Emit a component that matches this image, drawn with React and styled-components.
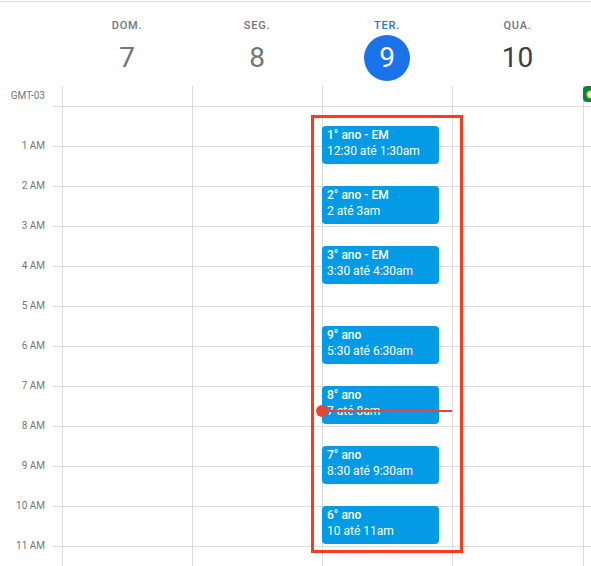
import React from "react";
import styled, { createGlobalStyle } from "styled-components";

const GlobalStyle = createGlobalStyle`
  html, body {
    margin: 0;
    padding: 0;
    background: #fff;
  }
  body {
    font-family: Roboto, "Noto Sans", Arial, sans-serif;
    -webkit-font-smoothing: antialiased;
  }
`;

const LINE = "#dadce0";
const HOUR = 40;
const COLS = "62px 130px 130px 130px 131px 130px";

const Page = styled.div`
  position: relative;
  width: 591px;
  height: 566px;
  overflow: hidden;
  padding-top: 1px;
  box-sizing: border-box;
`;

const Header = styled.div`
  display: grid;
  grid-template-columns: ${COLS};
  border-top: 1px solid ${LINE};
  padding: 16px 0 5px;
`;

const DayHead = styled.div`
  display: flex;
  flex-direction: column;
  align-items: center;
  gap: 1px;
`;

const DayLabel = styled.div`
  font-size: 11px;
  font-weight: 500;
  line-height: 16px;
  height: 16px;
  letter-spacing: 0.8px;
  text-transform: uppercase;
  color: ${(p) => (p.$today ? "#1a73e8" : "#70757a")};
`;

const DayNumber = styled.div`
  width: 46px;
  height: 46px;
  border-radius: 50%;
  display: flex;
  align-items: center;
  justify-content: center;
  font-size: 28px;
  line-height: 1;
  background: ${(p) => (p.$today ? "#1a73e8" : "transparent")};
  color: ${(p) => (p.$today ? "#fff" : p.$future ? "#3c4043" : "#70757a")};
`;

const Grid = styled.div`
  display: grid;
  grid-template-columns: ${COLS};
`;

const Gutter = styled.div`
  display: flex;
  flex-direction: column;
`;

const tick = `linear-gradient(${LINE}, ${LINE}) right bottom / 9px 1px no-repeat`;

const AllDayGutter = styled.div`
  height: 21px;
  padding: 0 17px 1px 0;
  box-sizing: border-box;
  display: flex;
  align-items: center;
  justify-content: flex-end;
  background: ${tick};
`;

const GutterText = styled.span`
  font-size: 10px;
  line-height: 12px;
  color: #70757a;
`;

const HourLabel = styled.div`
  height: ${HOUR}px;
  flex-shrink: 0;
  padding-right: 17px;
  box-sizing: border-box;
  display: flex;
  align-items: flex-end;
  justify-content: flex-end;
  background: ${tick};

  ${GutterText} {
    transform: translateY(5px);
  }
`;

const DayColumn = styled.div`
  border-left: 1px solid ${LINE};
  display: flex;
  flex-direction: column;
  min-width: 0;
`;

const AllDayCell = styled.div`
  height: 20px;
  border-bottom: 1px solid ${LINE};
  position: relative;
`;

const AllDayChip = styled.div`
  height: 16px;
  margin: 0 12px 0 -1px;
  border-radius: 4px;
  background: #0b8043;
  display: flex;
  align-items: center;
  padding-left: 3px;
`;

const HourGrid = styled.div`
  position: relative;
  height: ${HOUR * 12}px;
  background: repeating-linear-gradient(
    to bottom,
    transparent 0,
    transparent ${HOUR - 1}px,
    ${LINE} ${HOUR - 1}px,
    ${LINE} ${HOUR}px
  );
`;

const Event = styled.div`
  position: absolute;
  left: -1px;
  width: 117px;
  box-sizing: border-box;
  padding: 1px 4px 0 5px;
  border-radius: 4px;
  background: #039be5;
  color: #fff;
  font-size: 12px;
  line-height: 16px;
  overflow: hidden;
  white-space: nowrap;
`;

const EventTitle = styled.div`
  font-weight: 500;
`;

const NowLine = styled.div`
  position: absolute;
  left: -1px;
  right: 0;
  height: 2px;
  background: #ea4335;
  z-index: 2;
`;

const NowDot = styled.div`
  position: absolute;
  left: -6px;
  top: -5px;
  width: 12px;
  height: 12px;
  border-radius: 50%;
  background: #ea4335;
`;

const Highlight = styled.div`
  position: absolute;
  left: 311px;
  top: 115px;
  width: 152px;
  height: 438px;
  box-sizing: border-box;
  border: 3px solid #fc3a1c;
  pointer-events: none;
  z-index: 5;
`;

// the fifth column (qui.) only shows its first few pixels at the right edge
const days = [
  { label: "dom.", num: 7 },
  { label: "seg.", num: 8 },
  { label: "ter.", num: 9, today: true },
  { label: "qua.", num: 10, future: true },
  { num: 11, offscreen: true },
];

const hours = [
  "1 AM", "2 AM", "3 AM", "4 AM", "5 AM", "6 AM",
  "7 AM", "8 AM", "9 AM", "10 AM", "11 AM", "",
];

const events = [
  { title: "1° ano - EM", time: "12:30 até 1:30am", start: 0.5 },
  { title: "2° ano - EM", time: "2 até 3am", start: 2 },
  { title: "3° ano - EM", time: "3:30 até 4:30am", start: 3.5 },
  { title: "9° ano", time: "5:30 até 6:30am", start: 5.5 },
  { title: "8° ano", time: "7 até 8am", start: 7 },
  { title: "7° ano", time: "8:30 até 9:30am", start: 8.5 },
  { title: "6° ano", time: "10 até 11am", start: 10 },
];

const NOW = 7.6;

const ChipIcon = () => (
  <svg width="9" height="9" viewBox="0 0 9 9">
    <circle cx="4.5" cy="4.5" r="3.3" fill="#e8f5e9" stroke="#f6bf26" strokeWidth="1.6" />
  </svg>
);

const App = () => {
  return (
    <Page>
      <GlobalStyle />
      <Header>
        <div />
        {days.map((d) =>
          d.offscreen ? (
            <div key={d.num} />
          ) : (
            <DayHead key={d.num}>
              <DayLabel $today={d.today}>{d.label}</DayLabel>
              <DayNumber $today={d.today} $future={d.future}>
                {d.num}
              </DayNumber>
            </DayHead>
          )
        )}
      </Header>

      <Grid>
        <Gutter>
          <AllDayGutter>
            <GutterText>GMT-03</GutterText>
          </AllDayGutter>
          {hours.map((h, i) => (
            <HourLabel key={i}>
              <GutterText>{h}</GutterText>
            </HourLabel>
          ))}
        </Gutter>

        {days.map((d) => (
          <DayColumn key={d.num}>
            <AllDayCell>
              {d.offscreen && (
                <AllDayChip>
                  <ChipIcon />
                </AllDayChip>
              )}
            </AllDayCell>
            <HourGrid>
              {d.today &&
                events.map((e) => (
                  <Event
                    key={e.title}
                    style={{ top: e.start * HOUR - 1, height: HOUR - 2 }}
                  >
                    <EventTitle>{e.title}</EventTitle>
                    <div>{e.time}</div>
                  </Event>
                ))}
              {d.today && (
                <NowLine style={{ top: NOW * HOUR - 1 }}>
                  <NowDot />
                </NowLine>
              )}
            </HourGrid>
          </DayColumn>
        ))}
      </Grid>

      <Highlight />
    </Page>
  );
};

export default App;
